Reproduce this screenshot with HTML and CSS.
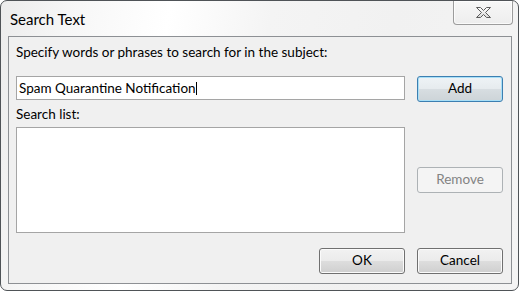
FILE: index.html
```html
<!DOCTYPE html>
<html>
<head>
<meta charset="utf-8">
<link rel="stylesheet" href="styles.css">
</head>
<body>
<div class="window">
  <div class="titlebar">
    <span class="title">Search Text</span>
    <div class="close">
      <svg width="17" height="13" viewBox="0 0 17 13">
        <defs>
          <linearGradient id="xg" x1="0" y1="0" x2="0" y2="1">
            <stop offset="0" stop-color="#ffffff"/>
            <stop offset="1" stop-color="#d8d8d8"/>
          </linearGradient>
        </defs>
        <polygon points="1.5,1.5 5.5,1.5 8.5,4.5 11.5,1.5 15.5,1.5 10.5,6.5 15.5,11.5 11.5,11.5 8.5,8.5 5.5,11.5 1.5,11.5 6.5,6.5" fill="url(#xg)" stroke="#5b5b5b" stroke-width="1" stroke-linejoin="round"/>
      </svg>
    </div>
  </div>
  <div class="client">
    <div class="label first">Specify words or phrases to search for in the subject:</div>
    <div class="textbox"><span>Spam Quarantine Notification</span><span class="caret"></span></div>
    <button class="btn default">Add</button>
    <div class="label second">Search list:</div>
    <div class="listbox"></div>
    <div class="side"><button class="btn disabled">Remove</button></div>
    <button class="btn ok">OK</button>
    <button class="btn cancel">Cancel</button>
  </div>
</div>
</body>
</html>
```
FILE: styles.css
```css
html, body {
  margin: 0;
  background: #ffffff;
}
body {
  font-family: "Segoe UI", Lato, "Noto Sans", sans-serif;
  font-size: 13.5px;
  color: #000;
}
.window {
  width: 519px;
  height: 291px;
  box-sizing: border-box;
  border: 1px solid #4f5357;
  border-radius: 7px;
  background: linear-gradient(100deg, #ececec 0%, #f6f6f6 12%, #ffffff 30%, #f4f4f4 48%, #f1f1f1 70%, #f4f4f4 100%);
  display: flex;
  flex-direction: column;
  overflow: hidden;
}
.titlebar {
  height: 35px;
  flex: none;
  display: flex;
  justify-content: space-between;
  align-items: flex-start;
  padding-left: 9px;
}
.title {
  font-size: 15px;
  line-height: 20px;
  margin-top: 8px;
}
.close {
  width: 60px;
  height: 24px;
  box-sizing: border-box;
  margin-right: 5px;
  border: 1px solid #9c9c9c;
  border-top: none;
  border-radius: 0 0 4px 4px;
  background: linear-gradient(#f7f7f7, #ededed);
  box-shadow: inset 0 0 0 1px rgba(255,255,255,0.7);
  display: flex;
  align-items: center;
  justify-content: center;
  padding-bottom: 1px;
}
.close svg { display: block; }
.client {
  flex: 1;
  margin: 0 6px 6px 7px;
  border: 1px solid #8d9094;
  background: #f0f0f0;
  display: grid;
  grid-template-columns: 389px 86px;
  column-gap: 12px;
  align-content: start;
  align-items: start;
  padding-left: 7px;
}
.label {
  grid-column: 1 / -1;
  line-height: 20px;
  white-space: nowrap;
}
.label.first { margin-top: 5px; }
.label.second { margin-top: 2px; }
.textbox {
  margin-top: 14px;
  height: 24px;
  box-sizing: border-box;
  border: 1px solid #a5a5a5;
  background: #fff;
  padding-left: 2px;
  line-height: 21px;
  white-space: nowrap;
  display: flex;
  align-items: center;
}
.caret {
  display: inline-block;
  width: 1px;
  height: 13px;
  background: #000;
  margin-left: 0;
  margin-top: 1px;
}
.listbox {
  margin-top: 3px;
  height: 106px;
  box-sizing: border-box;
  border: 1px solid #a5a5a5;
  background: #fff;
}
.side {
  margin-top: 3px;
  padding-top: 40px;
}
.btn {
  font-family: inherit;
  font-size: 13.5px;
  color: #000;
  width: 86px;
  height: 26px;
  box-sizing: border-box;
  border: 1px solid #707070;
  border-radius: 3px;
  background: linear-gradient(#f2f2f2 0%, #ebebeb 48%, #dddddd 52%, #cfcfcf 100%);
  box-shadow: inset 0 0 0 1px #fbfbfb;
  padding: 0 0 2px 0;
  margin: 0;
  line-height: 20px;
  display: block;
}
.btn.default {
  margin-top: 14px;
  border-color: #3c7fb1;
  box-shadow: inset 0 0 0 1px #a8dff7;
  background: linear-gradient(#eef3f6 0%, #e6ebee 48%, #d7dde1 52%, #cdd4d8 100%);
}
.btn.disabled {
  border-color: #adb2b5;
  background: #f4f4f4;
  box-shadow: none;
  color: #838383;
}
.btn.ok {
  margin-top: 15px;
  justify-self: end;
}
.btn.cancel {
  margin-top: 15px;
}
```
